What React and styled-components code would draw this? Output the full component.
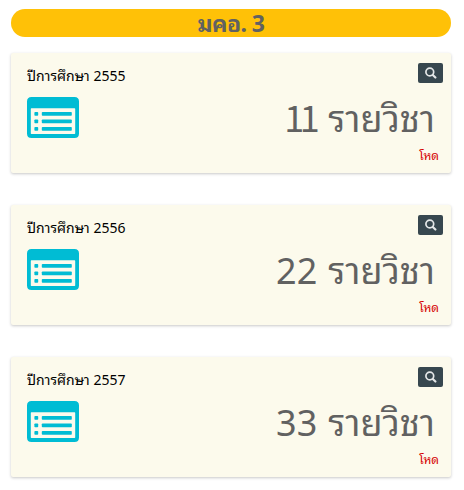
import React from "react";
import styled, { createGlobalStyle } from "styled-components";

const GlobalStyle = createGlobalStyle`
  * { box-sizing: border-box; }
  body {
    margin: 0;
    background: #fff;
    font-family: "Noto Sans Thai Looped", "Noto Sans", sans-serif;
  }
`;

const Page = styled.main`
  width: 464px;
  height: 490px;
  padding: 9px 13px 0 11px;
  overflow: hidden;
`;

const Title = styled.h1`
  height: 28px;
  margin: 0 0 16px;
  border-radius: 14px;
  background: #ffc107;
  color: #616161;
  font-size: 23px;
  font-weight: 700;
  letter-spacing: -0.6px;
  line-height: 26px;
  text-align: center;
`;

const CardList = styled.div`
  display: grid;
  gap: 32px;
`;

const Card = styled.section`
  display: flex;
  flex-direction: column;
  height: 120px;
  padding: 10px 8px 0 16px;
  border-radius: 2px;
  background: #fcfaec;
  box-shadow: 0 1px 3px rgba(0, 0, 0, 0.22);
`;

const Row = styled.div`
  display: flex;
  justify-content: space-between;
  align-items: flex-start;
`;

const Year = styled.div`
  height: 34px;
  padding-top: 1px;
  color: #000;
  font-size: 14px;
  line-height: 22px;
`;

const SearchButton = styled.button`
  display: flex;
  align-items: center;
  justify-content: center;
  width: 25px;
  height: 20px;
  padding: 0;
  border: 0;
  border-radius: 2px;
  background: #37474f;
  color: #e4e7e8;
`;

const Total = styled.div`
  display: flex;
  align-items: baseline;
  gap: 11px;
  height: 44px;
  margin-right: 8px;
  color: #616161;
  font-size: 36px;
  line-height: 38px;
  white-space: nowrap;
`;

const Digits = styled.span`
  margin-right: ${(p) => (p.$narrow ? "2px" : "0")};
  font-family: ${(p) => (p.$narrow ? '"Noto Sans CJK SC"' : '"Noto Sans"')}, sans-serif;
  letter-spacing: ${(p) => (p.$narrow ? "-4.5px" : "0")};
  line-height: 1;
`;

const LoadLink = styled.a`
  align-self: flex-end;
  margin: 4px 4px 0 0;
  color: #d50000;
  font-size: 12px;
  line-height: 20px;
  text-decoration: none;
`;

const ListIcon = () => (
  <svg width="52" height="41" viewBox="0 0 52 41">
    <path
      fill="#00bcd4"
      fillRule="evenodd"
      d="M4.5 0H47.5Q52 0 52 4.5V36.5Q52 41 47.5 41H4.5Q0 41 0 36.5V4.5Q0 0 4.5 0ZM4.4 11.3Q3.8 11.3 3.8 12V36.3Q3.8 37 4.4 37H47.6Q48.2 37 48.2 36.3V12Q48.2 11.3 47.6 11.3Z"
    />
    <g fill="#00bcd4">
      {[15, 22.4, 29.9].map((y) => (
        <React.Fragment key={y}>
          <rect x="7.4" y={y} width="3.8" height="3.8" rx="0.8" />
          <rect x="14.8" y={y} width="30" height="3.8" rx="0.8" />
        </React.Fragment>
      ))}
    </g>
  </svg>
);

const SearchIcon = () => (
  <svg width="12" height="12" viewBox="0 0 12 12" fill="none" stroke="currentColor">
    <circle cx="4.8" cy="5" r="3.9" strokeWidth="1.7" />
    <path d="M7.8 7.9L10.4 10.6" strokeWidth="2.1" strokeLinecap="round" />
  </svg>
);

const years = [
  { year: 2555, total: 11 },
  { year: 2556, total: 22 },
  { year: 2557, total: 33 },
];

export default function App() {
  return (
    <>
      <GlobalStyle />
      <Page>
        <Title>มคอ. 3</Title>
        <CardList>
          {years.map(({ year, total }) => (
            <Card key={year}>
              <Row>
                <Year>ปีการศึกษา {year}</Year>
                <SearchButton aria-label="ค้นหา">
                  <SearchIcon />
                </SearchButton>
              </Row>
              <Row>
                <ListIcon />
                <Total>
                  <Digits $narrow={total === 11}>{total}</Digits>
                  <span>รายวิชา</span>
                </Total>
              </Row>
              <LoadLink>โหด</LoadLink>
            </Card>
          ))}
        </CardList>
      </Page>
    </>
  );
}
